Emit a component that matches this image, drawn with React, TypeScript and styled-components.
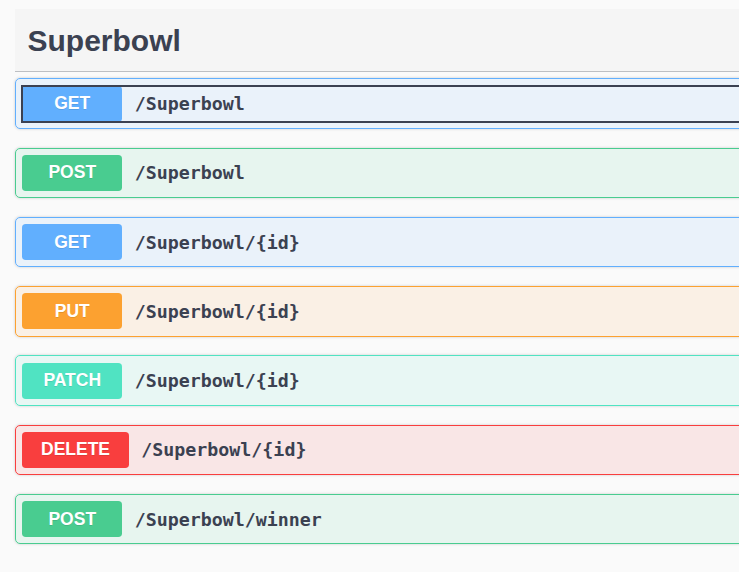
import React from 'react'
import styled, { createGlobalStyle } from 'styled-components'

type Method = 'get' | 'post' | 'put' | 'patch' | 'delete'

const methodColors: Record<Method, { main: string; bg: string }> = {
    get: { main: '#61affe', bg: 'rgba(97,175,254,.1)' },
    post: { main: '#49cc90', bg: 'rgba(73,204,144,.1)' },
    put: { main: '#fca130', bg: 'rgba(252,161,48,.1)' },
    patch: { main: '#50e3c2', bg: 'rgba(80,227,194,.1)' },
    delete: { main: '#f93e3e', bg: 'rgba(249,62,62,.1)' },
}

const endpoints: { method: Method; path: string; focused?: boolean }[] = [
    { method: 'get', path: '/Superbowl', focused: true },
    { method: 'post', path: '/Superbowl' },
    { method: 'get', path: '/Superbowl/{id}' },
    { method: 'put', path: '/Superbowl/{id}' },
    { method: 'patch', path: '/Superbowl/{id}' },
    { method: 'delete', path: '/Superbowl/{id}' },
    { method: 'post', path: '/Superbowl/winner' },
]

const GlobalStyle = createGlobalStyle`
    html, body {
        margin: 0;
        padding: 0;
        background: #fafafa;
        overflow: hidden;
    }
`

const Page = styled.div`
    width: 900px;
    padding: 9px 0 0 15px;
    font-family: 'Liberation Sans', Arial, sans-serif;
    color: #3b4151;
`

const TagHeader = styled.div`
    display: flex;
    align-items: center;
    padding: 12.5px 25px 12.5px 12.5px;
    margin-bottom: 6.25px;
    background: #f5f5f5;
    border-bottom: 1px solid rgba(59, 65, 81, .3);
`

const TagTitle = styled.h4`
    margin: 0;
    font-size: 30px;
    line-height: 37px;
    font-weight: 700;
    color: #3b4151;
`

const Block = styled.div<{ $method: Method }>`
    margin-bottom: 18.75px;
    border: 1px solid ${p => methodColors[p.$method].main};
    border-radius: 5px;
    background: ${p => methodColors[p.$method].bg};
    box-shadow: 0 0 3px rgba(0, 0, 0, .19);
    padding: 6.25px;
`

const Summary = styled.div<{ $focused?: boolean }>`
    display: flex;
    align-items: center;
    ${p => p.$focused && 'outline: 2px solid #3b4151; outline-offset: -1px;'}
`

const MethodBadge = styled.span<{ $method: Method }>`
    min-width: 100px;
    padding: 7.5px 18.75px;
    box-sizing: border-box;
    border-radius: 3.75px;
    background: ${p => methodColors[p.$method].main};
    color: #fff;
    font-size: 17.5px;
    line-height: 21px;
    font-weight: 700;
    text-align: center;
    text-transform: uppercase;
    text-shadow: 0 1px 0 rgba(0, 0, 0, .1);
`

const PathText = styled.span`
    padding: 0 12.5px;
    font-family: 'DejaVu Sans Mono', 'Liberation Mono', monospace;
    font-size: 18.3px;
    font-weight: 700;
    color: #3b4151;
`

const App = () => {
    return (
        <>
            <GlobalStyle />
            <Page>
                <TagHeader>
                    <TagTitle>Superbowl</TagTitle>
                </TagHeader>
                {endpoints.map((ep, i) => (
                    <Block key={i} $method={ep.method}>
                        <Summary $focused={ep.focused}>
                            <MethodBadge $method={ep.method}>{ep.method}</MethodBadge>
                            <PathText>{ep.path}</PathText>
                        </Summary>
                    </Block>
                ))}
            </Page>
        </>
    )
}

export default App
